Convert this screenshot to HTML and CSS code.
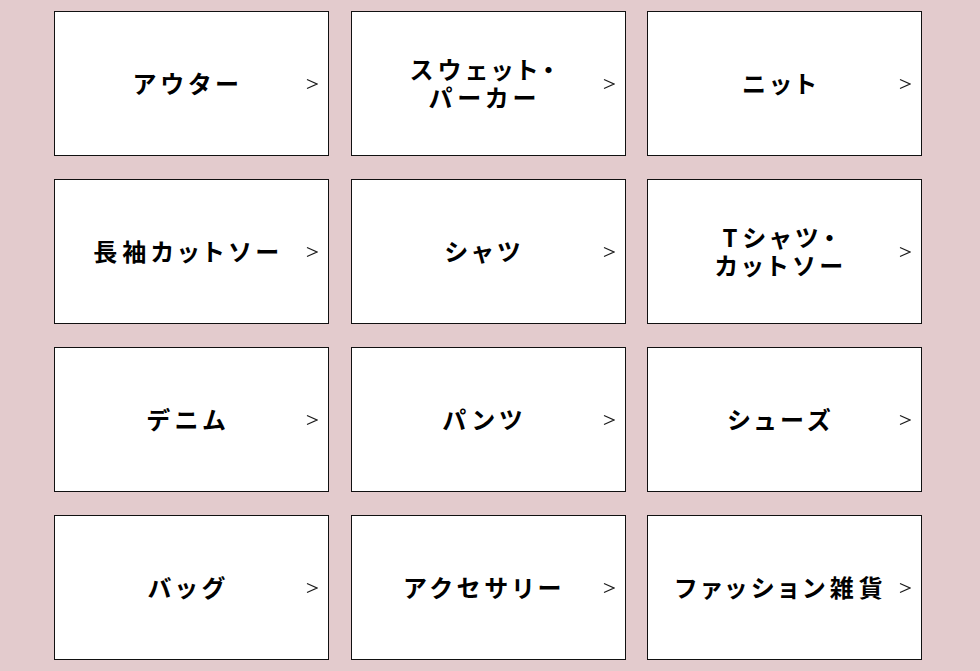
FILE: index.html
```html
<!DOCTYPE html>
<html lang="ja">
<head>
<meta charset="utf-8">
<title>カテゴリー</title>
<link rel="stylesheet" href="styles.css">
</head>
<body>
<ul class="categories">
  <li class="card"><span class="label">アウター</span><svg class="arrow" viewBox="0 0 12 12"><polyline points="1,1.5 11,6 1,10.5"/></svg></li>
  <li class="card"><span class="label">スウェット・<br>パーカー</span><svg class="arrow" viewBox="0 0 12 12"><polyline points="1,1.5 11,6 1,10.5"/></svg></li>
  <li class="card"><span class="label">ニット</span><svg class="arrow" viewBox="0 0 12 12"><polyline points="1,1.5 11,6 1,10.5"/></svg></li>
  <li class="card"><span class="label">長袖カットソー</span><svg class="arrow" viewBox="0 0 12 12"><polyline points="1,1.5 11,6 1,10.5"/></svg></li>
  <li class="card"><span class="label">シャツ</span><svg class="arrow" viewBox="0 0 12 12"><polyline points="1,1.5 11,6 1,10.5"/></svg></li>
  <li class="card"><span class="label">Tシャツ・<br>カットソー</span><svg class="arrow" viewBox="0 0 12 12"><polyline points="1,1.5 11,6 1,10.5"/></svg></li>
  <li class="card"><span class="label">デニム</span><svg class="arrow" viewBox="0 0 12 12"><polyline points="1,1.5 11,6 1,10.5"/></svg></li>
  <li class="card"><span class="label">パンツ</span><svg class="arrow" viewBox="0 0 12 12"><polyline points="1,1.5 11,6 1,10.5"/></svg></li>
  <li class="card"><span class="label">シューズ</span><svg class="arrow" viewBox="0 0 12 12"><polyline points="1,1.5 11,6 1,10.5"/></svg></li>
  <li class="card"><span class="label">バッグ</span><svg class="arrow" viewBox="0 0 12 12"><polyline points="1,1.5 11,6 1,10.5"/></svg></li>
  <li class="card"><span class="label">アクセサリー</span><svg class="arrow" viewBox="0 0 12 12"><polyline points="1,1.5 11,6 1,10.5"/></svg></li>
  <li class="card"><span class="label">ファッション雑貨</span><svg class="arrow" viewBox="0 0 12 12"><polyline points="1,1.5 11,6 1,10.5"/></svg></li>
</ul>
</body>
</html>
```

FILE: styles.css
```css
html, body {
  margin: 0;
  padding: 0;
  background: #e3cbcd;
}

body {
  font-family: "Noto Sans CJK JP", "Noto Sans", sans-serif;
  color: #000;
}

.categories {
  list-style: none;
  margin: 0;
  padding: 11px 0 0 54px;
  display: grid;
  grid-template-columns: repeat(3, 275px);
  grid-auto-rows: 145px;
  column-gap: 21.5px;
  row-gap: 23px;
}

.card {
  position: relative;
  box-sizing: border-box;
  background: #fff;
  border: 1px solid #111;
  display: flex;
  align-items: center;
  justify-content: center;
  padding: 0 6px 1px 0;
}

.label {
  font-size: 24px;
  font-weight: 700;
  letter-spacing: 5px;
  line-height: 28px;
  text-align: center;
  font-feature-settings: "palt";
}

.arrow {
  position: absolute;
  right: 10px;
  top: 50%;
  width: 12px;
  height: 12px;
  margin-top: -6px;
  fill: none;
  stroke: #1a1a1a;
  stroke-width: 1.15;
}
```
